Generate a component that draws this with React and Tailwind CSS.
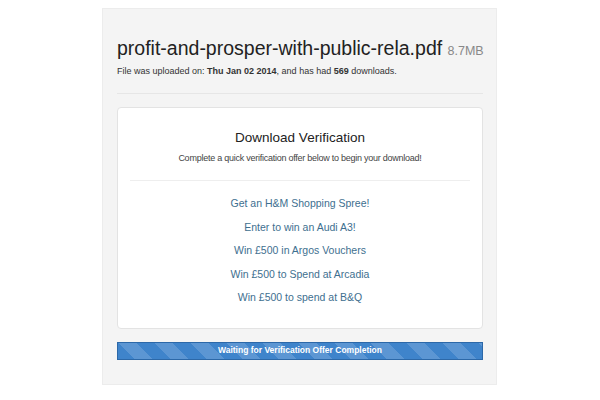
const offers = [
  'Get an H&M Shopping Spree!',
  'Enter to win an Audi A3!',
  'Win £500 in Argos Vouchers',
  'Win £500 to Spend at Arcadia',
  'Win £500 to spend at B&Q',
]

export default function App() {
  return (
    <div className="w-[600px] h-[400px] bg-white font-['Liberation_Sans',Arial,sans-serif] pt-[8px]">
      <div className="ml-[102px] w-[395px] h-[377px] bg-[#f4f4f4] border border-[#ececec] pl-[14px] pr-[13px] pt-[26px]">
        <h1 className="text-[19.5px] leading-[26px] text-[#222] whitespace-nowrap">
          profit-and-prosper-with-public-rela.pdf{' '}
          <span className="text-[12.5px] text-[#888]">8.7MB</span>
        </h1>
        <p className="mt-[1px] text-[9px] leading-[13px] text-[#333]">
          File was uploaded on: <b>Thu Jan 02 2014</b>, and has had <b>569</b> downloads.
        </p>
        <div className="mt-[15px] border-t border-[#e6e6e6]" />

        <div className="mt-[13px] bg-white border border-[#e3e3e3] rounded-[4px] px-[12px] pt-[22px] pb-[23px] text-center">
          <h2 className="text-[13.5px] leading-[16px] text-[#222]">Download Verification</h2>
          <p className="mt-[7px] text-[9px] leading-[11px] text-[#444] tracking-[-0.25px]">
            Complete a quick verification offer below to begin your download!
          </p>
          <div className="mt-[16px] border-t border-[#eeeeee]" />
          <ul className="mt-[16px] flex flex-col gap-[10px]">
            {offers.map((o) => (
              <li key={o} className="text-[10.5px] leading-[13.5px] text-[#3e6f8f]">{o}</li>
            ))}
          </ul>
        </div>

        <div
          className="mt-[13px] h-[18px] border border-[#2c68a8] bg-[#3f84cb] flex items-center justify-center text-white text-[8.5px] font-bold leading-none"
          style={{
            backgroundImage:
              'linear-gradient(45deg, rgba(255,255,255,.15) 25%, transparent 25%, transparent 50%, rgba(255,255,255,.15) 50%, rgba(255,255,255,.15) 75%, transparent 75%, transparent)',
            backgroundSize: '36px 36px',
          }}
        >
          Waiting for Verification Offer Completion
        </div>
      </div>
    </div>
  )
}
